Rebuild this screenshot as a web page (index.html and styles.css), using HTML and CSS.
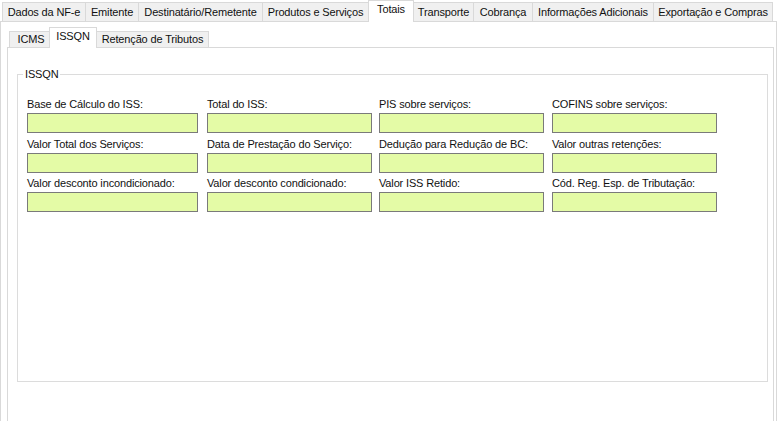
FILE: index.html
```html
<!DOCTYPE html>
<html lang="pt-BR">
<head>
    <meta charset="UTF-8">
    <title>NF-e - Totais</title>
    <link rel="stylesheet" href="styles.css">
</head>
<body>
    <!-- Main tabs -->
    <div class="tab-strip main-strip">
        <div class="tab t-dados">Dados da NF-e</div>
        <div class="tab t-emitente">Emitente</div>
        <div class="tab t-dest">Destinatário/Remetente</div>
        <div class="tab t-prod">Produtos e Serviços</div>
        <div class="tab t-totais active">Totais</div>
        <div class="tab t-transp">Transporte</div>
        <div class="tab t-cobr">Cobrança</div>
        <div class="tab t-info">Informações Adicionais</div>
        <div class="tab t-export">Exportação e Compras</div>
    </div>

    <div class="main-page">
        <!-- Sub tabs of Totais -->
        <div class="tab-strip sub-strip">
            <div class="sub-tab s-icms">ICMS</div>
            <div class="sub-tab s-issqn active">ISSQN</div>
            <div class="sub-tab s-ret">Retenção de Tributos</div>
        </div>

        <div class="sub-page">
            <fieldset class="group">
                <legend>ISSQN</legend>
                <div class="fields">
                    <div class="field first">
                        <label>Base de Cálculo do ISS:</label>
                        <input type="text">
                    </div>
                    <div class="field">
                        <label>Total do ISS:</label>
                        <input type="text">
                    </div>
                    <div class="field">
                        <label>PIS sobre serviços:</label>
                        <input type="text">
                    </div>
                    <div class="field">
                        <label>COFINS sobre serviços:</label>
                        <input type="text">
                    </div>

                    <div class="field first">
                        <label>Valor Total dos Serviços:</label>
                        <input type="text">
                    </div>
                    <div class="field">
                        <label>Data de Prestação do Serviço:</label>
                        <input type="text">
                    </div>
                    <div class="field">
                        <label>Dedução para Redução de BC:</label>
                        <input type="text">
                    </div>
                    <div class="field">
                        <label>Valor outras retenções:</label>
                        <input type="text">
                    </div>

                    <div class="field first">
                        <label>Valor desconto incondicionado:</label>
                        <input type="text">
                    </div>
                    <div class="field">
                        <label>Valor desconto condicionado:</label>
                        <input type="text">
                    </div>
                    <div class="field">
                        <label>Valor ISS Retido:</label>
                        <input type="text">
                    </div>
                    <div class="field">
                        <label>Cód. Reg. Esp. de Tributação:</label>
                        <input type="text">
                    </div>
                </div>
            </fieldset>
        </div>
    </div>
</body>
</html>
```

FILE: styles.css
```css
/* General styling */
* {
    box-sizing: border-box;
}

html, body {
    margin: 0;
    height: 421px;
    overflow: hidden;
}

body {
    font-family: "Liberation Sans", Arial, sans-serif;
    font-size: 11px;
    letter-spacing: -0.15px;
    color: #111;
    background-color: #fff;
}

/* Tab strips */
.tab-strip {
    display: flex;
    align-items: flex-end;
}

.main-strip {
    height: 21px;
    padding-left: 2px;
}

.tab {
    height: 19px;
    padding-top: 3px;
    line-height: 13px;
    margin-right: -1px;
    border: 1px solid #d9d9d9;
    border-bottom: none;
    background-color: #f0f0f0;
    text-align: center;
    white-space: nowrap;
}

.tab.active {
    height: 22px;
    padding-top: 2px;
    margin-bottom: -1px;
    background-color: #fff;
    position: relative;
    z-index: 1;
}

.t-dados { width: 84px; }
.t-emitente { width: 54px; }
.t-dest { width: 125px; }
.t-prod { width: 107px; }
.t-totais { width: 46px; }
.t-transp { width: 61px; }
.t-cobr { width: 60px; }
.t-info { width: 122px; }
.t-export { width: 120px; }

.main-page {
    height: 400px;
    padding: 5px 2px 0 6px;
    border: 1px solid #d9d9d9;
    border-bottom: none;
}

.sub-strip {
    height: 20px;
    padding-left: 2px;
}

.sub-tab {
    height: 16px;
    padding-top: 1px;
    line-height: 13px;
    margin-right: -1px;
    border: 1px solid #d9d9d9;
    border-bottom: none;
    background-color: #f0f0f0;
    text-align: center;
    white-space: nowrap;
}

.sub-tab.active {
    height: 21px;
    padding-top: 2px;
    margin-left: -3px;
    margin-bottom: -1px;
    background-color: #fff;
    position: relative;
    z-index: 1;
}

.s-icms { width: 44px; }
.s-issqn { width: 48px; }
.s-ret { width: 113px; }

.sub-page {
    height: 380px;
    padding: 20px 5px 0 9px;
    border: 1px solid #d9d9d9;
    border-bottom: none;
}

/* Group box */
.group {
    margin: 0;
    min-width: 0;
    height: 314px;
    padding: 17px 0 0 9px;
    border: 1px solid #dcdcdc;
}

.group legend {
    padding: 0 2px;
    margin-left: -4px;
    line-height: 13px;
}

.fields {
    display: grid;
    grid-template-columns: 180px 172px 173px 165px;
    row-gap: 4.5px;
}

.field label {
    display: block;
    line-height: 13px;
    margin-bottom: 2px;
    white-space: nowrap;
}

.field input {
    display: block;
    width: 165px;
    height: 20px;
    margin: 0;
    padding: 0 2px;
    border: 1px solid #7a7a7a;
    background-color: #e4fba6;
    font: inherit;
}

.field.first input {
    width: 171px;
}
```
